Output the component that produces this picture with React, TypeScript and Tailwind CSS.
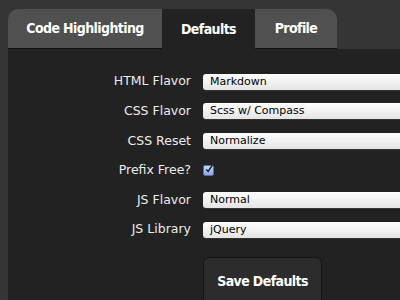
import React from 'react';

const tabs = [
  { label: 'Code Highlighting', active: false, className: 'w-[154px] rounded-tl-[10px]' },
  { label: 'Defaults', active: true, className: 'w-[93px]' },
  { label: 'Profile', active: false, className: 'w-[82px] rounded-tr-[10px]' },
];

const rows = [
  { label: 'HTML Flavor', value: 'Markdown' },
  { label: 'CSS Flavor', value: 'Scss w/ Compass' },
  { label: 'CSS Reset', value: 'Normalize' },
  { label: 'Prefix Free?', checkbox: true },
  { label: 'JS Flavor', value: 'Normal' },
  { label: 'JS Library', value: 'jQuery' },
];

function Select({ value }: { value: string }) {
  return (
    <div className="h-4 w-[230px] shrink-0 rounded-[3px] bg-gradient-to-b from-white to-[#e4e4e4] pl-[7px] text-[11px] leading-4 text-black shadow-[0_1px_0_rgba(255,255,255,0.08)]">
      {value}
    </div>
  );
}

function Checkbox() {
  return (
    <div className="flex h-[11px] w-[11px] shrink-0 items-center justify-center rounded-[2px] border border-[#5b6f9a] bg-gradient-to-b from-[#c9d8f5] to-[#8ba9e0]">
      <svg width="10" height="10" viewBox="0 0 10 10" className="-mt-[3px] ml-[1px]">
        <path d="M1.5 5.5 L4 8 L9 0.5" fill="none" stroke="#0b1a3a" strokeWidth="1.8" />
      </svg>
    </div>
  );
}

export default function App() {
  return (
    <div className="h-[300px] w-[400px] overflow-hidden bg-[#353535] pl-2 pt-[9px]">
      <div className="flex h-[40px]">
        {tabs.map((tab) => (
          <div
            key={tab.label}
            className={`flex items-center justify-center text-[14px] font-bold tracking-[-0.6px] text-white ${tab.className} ${
              tab.active ? 'bg-[#222222]' : 'bg-[#505050] border-b border-[#111]'
            }`}
            style={{ fontFamily: '"DejaVu Sans Condensed", "DejaVu Sans", sans-serif' }}
          >
            {tab.label}
          </div>
        ))}
      </div>
      <div
        className="h-[260px] bg-[#222222] pt-[18px]"
        style={{ fontFamily: '"DejaVu Sans", sans-serif' }}
      >
        {rows.map((row) => (
          <div key={row.label} className="flex h-[29.6px] items-center gap-3">
            <div className="w-[183px] shrink-0 text-right text-[12.5px] text-[#ececec]">{row.label}</div>
            {row.checkbox ? <Checkbox /> : <Select value={row.value!} />}
          </div>
        ))}
        <div className="mt-3 pl-[195px]">
          <button
            className="h-[50px] w-[119px] rounded-[6px] border border-[#151515] bg-[#2c2c2c] text-[14px] font-bold tracking-[-0.6px] text-white"
            style={{ fontFamily: '"DejaVu Sans Condensed", "DejaVu Sans", sans-serif' }}
          >
            Save Defaults
          </button>
        </div>
      </div>
    </div>
  );
}
